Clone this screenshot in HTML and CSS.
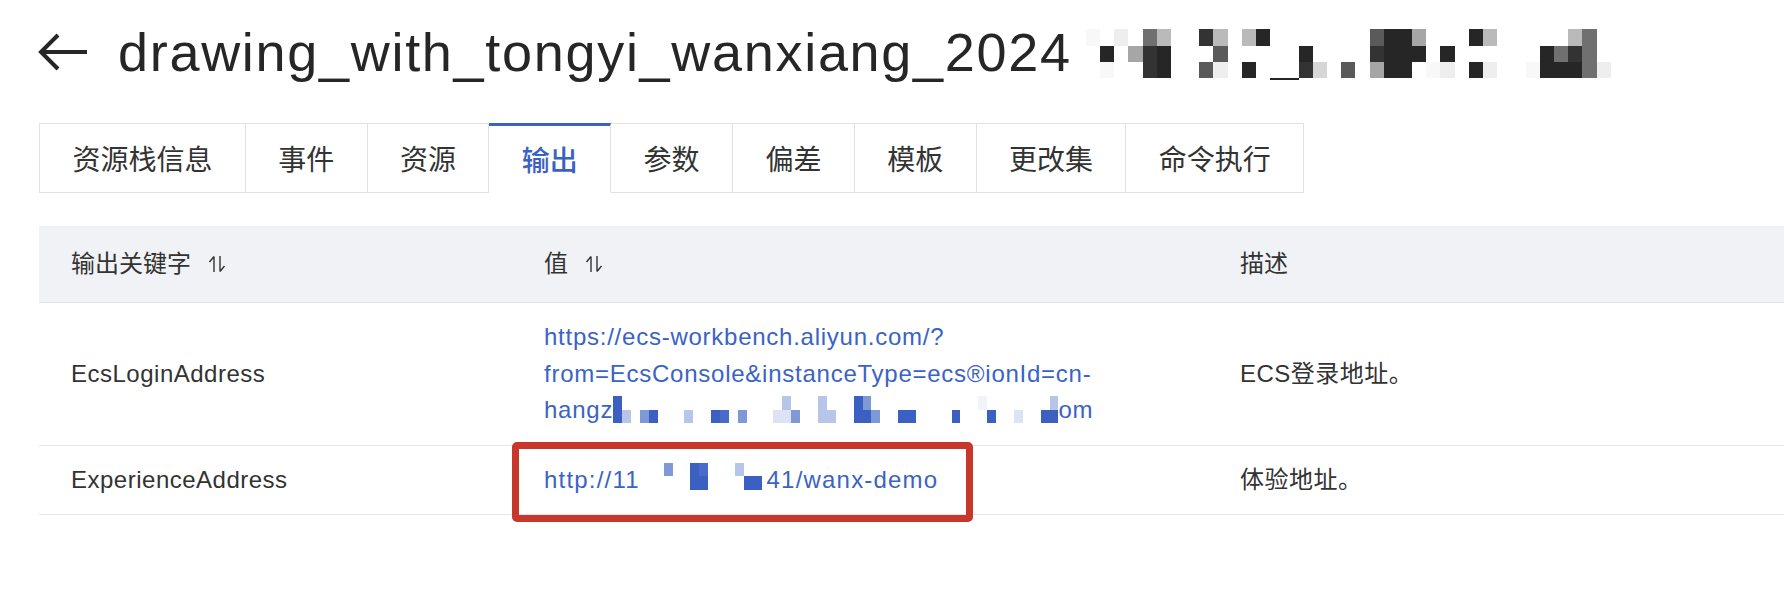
FILE: index.html
```html
<!DOCTYPE html>
<html lang="zh-CN">
<head>
<meta charset="utf-8">
<title>drawing_with_tongyi_wanxiang</title>
<link rel="stylesheet" href="styles.css">
</head>
<body>
<div class="page">
  <header class="title-bar">
    <svg class="back" viewBox="0 0 50 38" aria-hidden="true"><path d="M20 2 L3 19 L20 36 M3 19 H49" fill="none" stroke="#262626" stroke-width="4"/></svg>
    <h1 class="title">drawing_with_tongyi_wanxiang_2024<span class="mz"><span class="mz-grid">
<i class="s9"></i><i></i><i class="s8"></i><i></i><i class="s4"></i><i class="s6"></i><i></i><i></i><i class="s2"></i><i class="s6"></i><i></i><i class="s6"></i><i class="s1"></i><i></i><i></i><i></i><i></i><i></i><i></i><i></i><i class="s3"></i><i class="s1"></i><i class="s1"></i><i class="s5"></i><i></i><i></i><i></i><i class="s1"></i><i class="s6"></i><i></i><i></i><i></i><i></i><i></i><i class="s6"></i><i class="s4"></i><i></i>
<i></i><i class="s1"></i><i></i><i class="s5"></i><i class="s2"></i><i class="s1"></i><i></i><i></i><i></i><i class="s3"></i><i></i><i></i><i></i><i></i><i></i><i class="s1"></i><i></i><i></i><i></i><i></i><i class="s2"></i><i class="s1"></i><i class="s1"></i><i class="s1"></i><i></i><i class="s1"></i><i></i><i></i><i></i><i></i><i></i><i></i><i class="s1"></i><i class="s4"></i><i class="s2"></i><i class="s4"></i><i></i>
<i></i><i class="s9"></i><i></i><i></i><i class="s2"></i><i class="s1"></i><i></i><i></i><i class="s3"></i><i class="s8"></i><i></i><i class="s1"></i><i></i><i></i><i></i><i class="s2"></i><i class="s7"></i><i></i><i class="s3"></i><i></i><i class="s5"></i><i class="s1"></i><i class="s1"></i><i></i><i class="s9"></i><i class="s8"></i><i></i><i class="s1"></i><i class="s8"></i><i></i><i></i><i class="s9"></i><i class="s1"></i><i class="s1"></i><i class="s1"></i><i class="s4"></i><i class="s8"></i>
<i class="mz-u"></i>
</span></span></h1>
  </header>

  <nav class="tabs">
    <div class="tab">资源栈信息</div>
    <div class="tab">事件</div>
    <div class="tab">资源</div>
    <div class="tab active">输出</div>
    <div class="tab">参数</div>
    <div class="tab">偏差</div>
    <div class="tab">模板</div>
    <div class="tab">更改集</div>
    <div class="tab">命令执行</div>
  </nav>

  <div class="table">
    <div class="row head">
      <div class="cell">输出关键字<svg class="sort" viewBox="0 0 20 18" aria-hidden="true"><path d="M7 1.5V17M7 1.5L2.5 7M13 1V16.5M13 16.5L17.5 11" fill="none" stroke="#333" stroke-width="1.4"/></svg></div>
      <div class="cell">值<svg class="sort" viewBox="0 0 20 18" aria-hidden="true"><path d="M7 1.5V17M7 1.5L2.5 7M13 1V16.5M13 16.5L17.5 11" fill="none" stroke="#333" stroke-width="1.4"/></svg></div>
      <div class="cell">描述</div>
    </div>
    <div class="row">
      <div class="cell">EcsLoginAddress</div>
      <div class="cell"><div class="link">https://ecs-workbench.aliyun.com/?<br>from=EcsConsole&amp;instanceType=ecs&reg;ionId=cn-<br>hangz<span class="lmz lmz-1"><span class="lmz-grid">
<i class="b1"></i><i></i><i></i><i></i><i></i><i></i><i></i><i></i><i></i><i></i><i></i><i></i><i></i><i></i><i></i><i></i><i></i><i></i><i></i><i class="b4"></i><i></i><i></i><i></i><i class="b4"></i><i></i><i></i><i></i><i class="b1"></i><i class="b3"></i><i></i><i></i><i></i><i></i><i></i><i></i><i></i><i></i><i></i><i></i><i></i><i></i><i class="b6"></i><i></i><i></i><i></i><i></i><i></i><i></i><i></i><i class="b4"></i>
<i class="b1"></i><i class="b4"></i><i></i><i class="b3"></i><i class="b1"></i><i></i><i></i><i></i><i class="b4"></i><i></i><i></i><i class="b1"></i><i class="b2"></i><i></i><i class="b3"></i><i></i><i></i><i></i><i class="b5"></i><i class="b5"></i><i class="b3"></i><i></i><i></i><i class="b4"></i><i class="b4"></i><i></i><i></i><i class="b1"></i><i class="b1"></i><i class="b3"></i><i></i><i></i><i class="b1"></i><i class="b1"></i><i></i><i></i><i></i><i></i><i class="b1"></i><i></i><i></i><i></i><i class="b1"></i><i></i><i></i><i class="b5"></i><i></i><i></i><i class="b1"></i><i class="b1"></i>
</span></span>om</div></div>
      <div class="cell">ECS登录地址。</div>
    </div>
    <div class="row">
      <div class="cell">ExperienceAddress</div>
      <div class="cell val"><div class="link link-wide">http://11<span class="lmz lmz-2"><span class="lmz-grid">
<i class="b3"></i><i></i><i></i><i class="b1"></i><i class="b2"></i><i></i><i></i><i></i><i class="b4"></i><i></i><i></i>
<i></i><i></i><i></i><i class="b1"></i><i class="b1"></i><i></i><i></i><i></i><i></i><i class="b1"></i><i class="b1"></i>
</span></span>41/wanx-demo</div><div class="mark"></div></div>
      <div class="cell">体验地址。</div>
    </div>
  </div>
</div>
</body>
</html>
```

FILE: styles.css
```css
html, body {
  margin: 0;
  padding: 0;
  background: #ffffff;
}

body {
  font-family: "Liberation Sans", "Noto Sans CJK SC", sans-serif;
  color: #333333;
  min-height: 594px;
}

.page {
  padding-left: 39px;
  padding-bottom: 20px;
}

/* ---------- title ---------- */
.title-bar {
  display: flex;
  align-items: center;
  height: 64px;
  margin-top: 20px;
}

.back {
  flex: none;
  width: 50px;
  height: 38px;
  margin-left: -1px;
}

.title {
  margin: 0 0 0 30px;
  font-size: 54px;
  line-height: 64px;
  font-weight: 400;
  letter-spacing: 1.7px;
  color: #262626;
  white-space: nowrap;
}

.mz {
  display: inline-block;
  overflow: hidden;
  vertical-align: -9.3px;
  margin-left: 14px;
}

.mz-grid {
  display: grid;
  grid-template-columns: repeat(37, 14.2px);
  grid-template-rows: 16.1px 16.1px 16.1px 2.6px;
}

.mz-grid i {
  display: block;
}

.mz-grid .mz-u {
  grid-column: 14 / span 2;
  grid-row: 4;
  background: #262626;
}

.s1 { background: #262626; }
.s2 { background: #333333; }
.s3 { background: #5a5a5a; }
.s4 { background: #707070; }
.s5 { background: #a6a6a6; }
.s6 { background: #bababa; }
.s7 { background: #d6d6d6; }
.s8 { background: #eeeeee; }
.s9 { background: #f8f8f8; }

/* ---------- tabs ---------- */
.tabs {
  display: flex;
  margin-top: 39px;
}

.tab {
  box-sizing: border-box;
  height: 70px;
  padding: 0 32.4px;
  display: flex;
  align-items: center;
  border: 1px solid #e2e2e2;
  border-left: none;
  font-family: "Noto Sans CJK SC", sans-serif;
  font-size: 28px;
  color: #333333;
  background: #ffffff;
}

.tab:first-child {
  border-left: 1px solid #e2e2e2;
}

.tab.active {
  border-top: 3px solid #3b62c2;
  border-bottom-color: #ffffff;
  color: #3b62c2;
  font-weight: 500;
}

/* ---------- table ---------- */
.table {
  margin-top: 33px;
}

.row {
  display: grid;
  grid-template-columns: 473px 696px 1fr;
  border-bottom: 1px solid #e4e5e8;
}

.row.head {
  box-sizing: border-box;
  height: 77px;
  background: #f1f2f6;
}

.cell {
  display: flex;
  align-items: center;
  padding: 16px 32px;
  font-size: 24px;
  line-height: 36.5px;
  letter-spacing: 0.5px;
  color: #333333;
  white-space: nowrap;
}

.row.head .cell {
  padding: 0 32px;
  letter-spacing: 0;
}

.sort {
  width: 20px;
  height: 18px;
  margin-left: 16px;
  flex: none;
}

.link {
  color: #3a63c5;
  white-space: nowrap;
  letter-spacing: 0.75px;
}

.link-wide {
  letter-spacing: 1.2px;
}

.lmz {
  display: inline-block;
  overflow: hidden;
  vertical-align: -5px;
}

.lmz-grid {
  display: grid;
  grid-auto-rows: 13.3px;
}

.lmz-grid i {
  display: block;
}

.lmz-1 .lmz-grid {
  grid-template-columns: repeat(50, 8.92px);
}

.lmz-2 {
  margin: 0 5px 0 24px;
  vertical-align: -2px;
}

.lmz-2 .lmz-grid {
  grid-template-columns: repeat(11, 8.9px);
}

.b1 { background: #3b60c2; }
.b2 { background: #4a6cc8; }
.b3 { background: #7f98d6; }
.b4 { background: #b6c5e8; }
.b5 { background: #dbe3f4; }
.b6 { background: #f0f3fa; }

.cell.val {
  position: relative;
}

.mark {
  position: absolute;
  left: 0;
  top: -3.5px;
  width: 461px;
  height: 79.5px;
  box-sizing: border-box;
  border: 7px solid #c8372b;
  border-radius: 5px;
}
```
